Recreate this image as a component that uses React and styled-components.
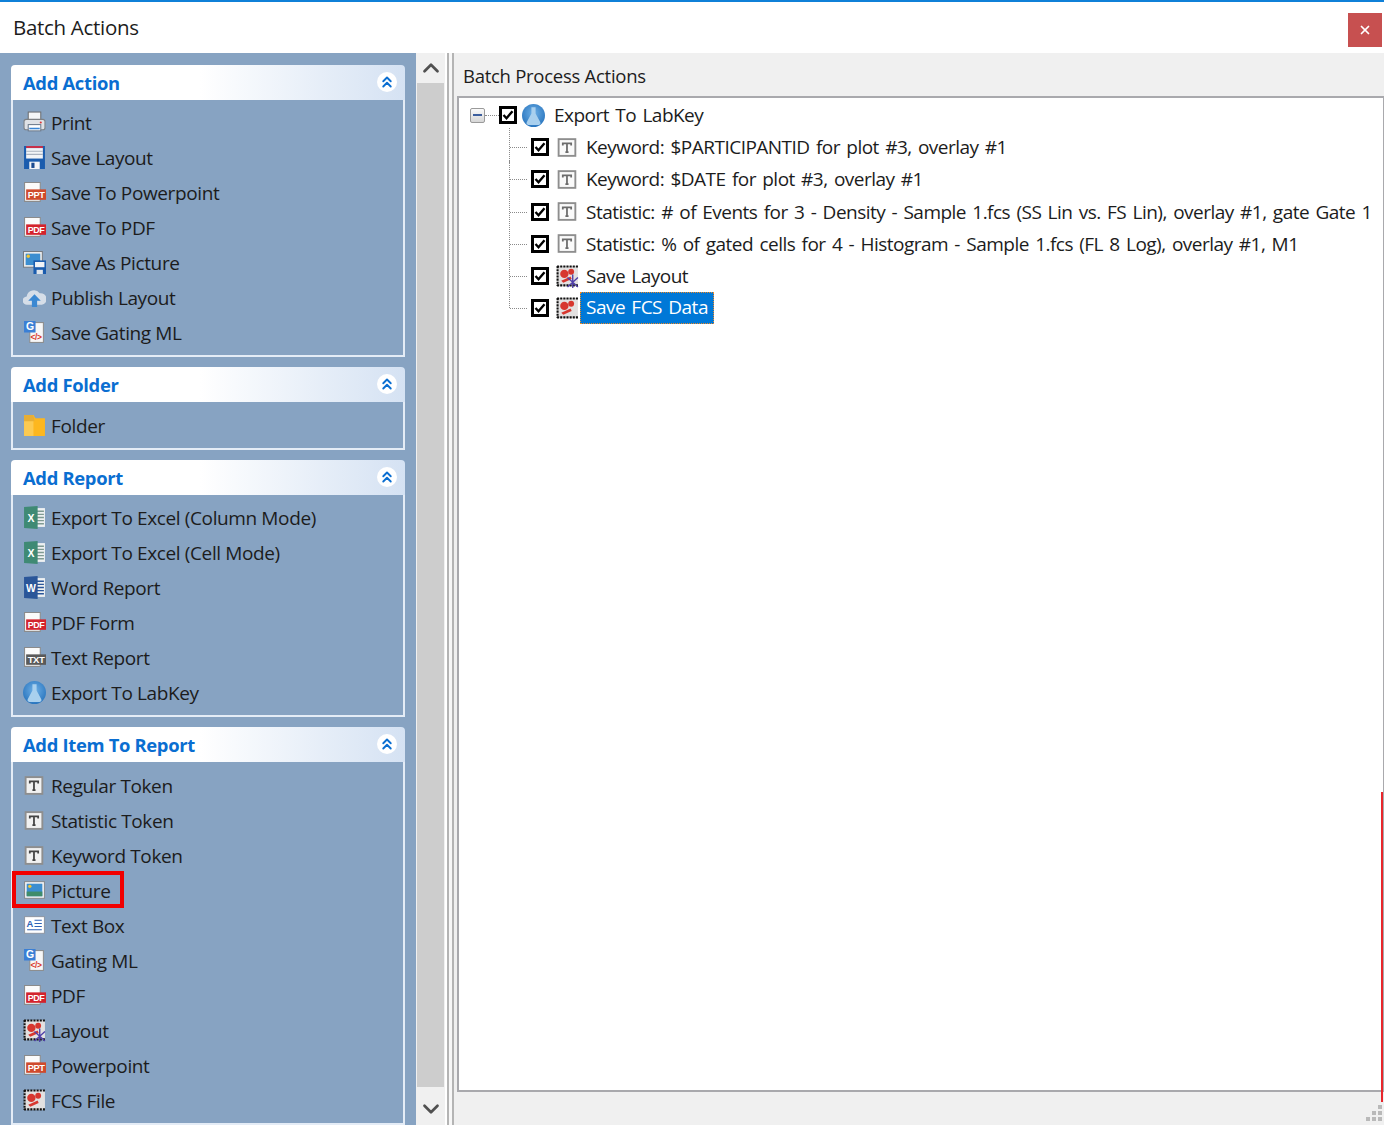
import styled, { createGlobalStyle } from 'styled-components'
import { ChevronDown, ChevronUp, ChevronsUp, X } from 'lucide-react'

const GlobalStyle = createGlobalStyle`
  html, body {
    margin: 0;
    background: #fff;
  }
  body {
    font-family: 'Open Sans', 'Noto Sans', 'Liberation Sans', sans-serif;
    color: #1c1c1c;
  }
  * {
    box-sizing: border-box;
  }
`

const Window = styled.div`
  border-top: 2px solid #0f80d8;
  display: flex;
  flex-direction: column;
  height: 1125px;
  overflow: hidden;
  position: relative;
  width: 1384px;
`

const TitleBar = styled.div`
  align-items: center;
  background: #fff;
  display: flex;
  flex: 0 0 51px;
  justify-content: space-between;
  padding: 0 2px 0 13px;
`

const Title = styled.div`
  font-size: 20.5px;
  letter-spacing: -0.3px;
  margin-bottom: 1px;
`

const CloseButton = styled.button`
  align-items: center;
  background: #c75050;
  border: 0;
  color: #fff;
  display: flex;
  height: 34px;
  justify-content: center;
  margin-top: 4px;
  padding: 0;
  width: 34px;
`

const Content = styled.div`
  display: flex;
  flex: 1;
  min-height: 0;
`

const SidePanel = styled.div`
  background: #87a3c2;
  display: flex;
  flex: 0 0 416px;
  flex-direction: column;
  padding: 12px 11px 0;
`

const Group = styled.section`
  flex: none;
  margin-bottom: 10px;
`

const GroupHeader = styled.div`
  align-items: center;
  background: linear-gradient(90deg, #fff 0%, #fff 48%, #d5e2f3 100%);
  border-radius: 4px 4px 0 0;
  display: flex;
  height: 35px;
  justify-content: space-between;
  padding: 0 8px 1px 12px;
`

const GroupTitle = styled.div`
  color: #0a6ed1;
  font-size: 18.4px;
  font-weight: 700;
  letter-spacing: -0.32px;
`

const CollapseButton = styled.span`
  align-items: center;
  background: #fff;
  border-radius: 50%;
  color: #0a6ed1;
  display: flex;
  height: 20px;
  justify-content: center;
  width: 20px;
`

const GroupBody = styled.div`
  border: solid #e4ecf6;
  border-width: 0 2px 2px;
  padding: ${({ $shift }) => `${5 + ($shift || 0)}px 0 5px`};
`

const Item = styled.div`
  align-items: center;
  display: flex;
  font-size: 19px;
  gap: 5px;
  height: 35px;
  letter-spacing: -0.38px;
  padding-left: 10px;
  position: relative;
  white-space: nowrap;

  ${({ $marked }) => $marked && `
    &::after {
      border: 4px solid #f00000;
      box-sizing: border-box;
      content: '';
      height: 37px;
      left: -1px;
      position: absolute;
      top: -2px;
      width: 112px;
    }
  `}
`

const ScrollBar = styled.div`
  background: #f0f0f0;
  display: flex;
  flex: 0 0 29px;
  flex-direction: column;
  padding-left: 1px;
`

const ScrollButton = styled.div`
  align-items: center;
  color: #505050;
  display: flex;
  flex: 0 0 ${({ $height }) => $height}px;
  justify-content: center;
  padding-top: ${({ $offset }) => $offset || 0}px;
  width: 27px;
`

const ScrollTrack = styled.div`
  background: #cdcdcd;
  flex: 1;
  width: 27px;
`

const Splitter = styled.div`
  background: #f7f7f7;
  border: solid #b4b4b4;
  border-width: 0 2px;
  flex: 0 0 7px;
  margin-left: 2px;
`

const ActionsPanel = styled.div`
  background: #f0f0f0;
  display: flex;
  flex: 1;
  flex-direction: column;
  min-width: 0;
  padding: 0 0 33px 3px;
  position: relative;
`

const ActionsTitle = styled.div`
  align-items: center;
  display: flex;
  flex: 0 0 43px;
  font-size: 18.5px;
  letter-spacing: -0.27px;
  padding: 1px 0 0 6px;
`

const TreeBox = styled.div`
  background: #fff;
  border: solid #a9a9ad;
  border-width: 2px 1px 2px 2px;
  flex: 1;
  overflow: hidden;
  padding-top: 1px;
`

const TreeRow = styled.div`
  align-items: center;
  display: flex;
  font-size: 19px;
  height: 32.2px;
  letter-spacing: -0.52px;
  padding-left: ${({ $root }) => ($root ? 11 : 50)}px;
  white-space: nowrap;
  word-spacing: 1.9px;
`

const Expander = styled.span`
  align-items: center;
  background: linear-gradient(180deg, #fafafa, #d6d6d6);
  border: 1px solid #9a9a9a;
  border-radius: 2px;
  display: flex;
  flex: 0 0 15px;
  height: 15px;
  justify-content: center;

  &::after {
    background: #3d5f9e;
    content: '';
    height: 2px;
    width: 9px;
  }
`

const RootDots = styled.span`
  border-top: 1px dotted #8a8a8a;
  flex: 0 0 14px;
`

const Connector = styled.span`
  align-self: stretch;
  flex: 0 0 22px;
  position: relative;

  &::before {
    border-left: 1px dotted #8a8a8a;
    bottom: ${({ $last }) => ($last ? '50%' : 0)};
    content: '';
    left: 0;
    position: absolute;
    top: -3px;
  }

  &::after {
    border-top: 1px dotted #8a8a8a;
    content: '';
    left: 1px;
    position: absolute;
    top: 50%;
    width: 17px;
  }
`

const CheckBox = styled.span`
  align-items: center;
  background: #fff;
  border: 3px solid #000;
  color: #000;
  display: flex;
  flex: 0 0 18px;
  height: 18px;
  justify-content: center;
`

const TreeIcon = styled.span`
  align-items: center;
  display: flex;
  flex: 0 0 23px;
  justify-content: center;
  margin: 0 ${({ $root }) => ($root ? 9 : 7)}px 0 ${({ $root }) => ($root ? 5 : 7)}px;
`

const TreeLabel = styled.span`
  ${({ $selected }) => $selected && `
    background: #0078d7;
    border: 1px dotted #f08a24;
    color: #fff;
    height: 32px;
    line-height: 29px;
    margin-left: -6px;
    padding: 0 5px;
  `}
`

const RedEdge = styled.div`
  background: #e8262c;
  height: 310px;
  position: absolute;
  right: 1px;
  top: 739px;
  width: 2px;
`

const Grip = styled.svg`
  bottom: 3px;
  position: absolute;
  right: 1px;
`

const Svg = ({ children }) => (
  <svg width={23} height={23} viewBox='0 0 22 22' style={{ flex: 'none' }}>
    {children}
  </svg>
)

const labelFont = 'Liberation Sans, sans-serif'

const PrintIcon = () => (
  <Svg>
    <rect x='5' y='1' width='12' height='8' fill='#f4f6f8' stroke='#6d6f72' />
    <rect x='1' y='8' width='20' height='10' rx='2' fill='#dfe2e6' stroke='#7d8084' />
    <circle cx='17' cy='11' r='1' fill='#d33' />
    <rect x='5' y='13' width='12' height='6' fill='#fff' stroke='#6d7b8c' />
    <rect x='6' y='16' width='10' height='1.5' fill='#3a86d4' />
  </Svg>
)

const SaveIcon = () => (
  <Svg>
    <rect x='1' y='0' width='20' height='22' fill='#1a5cae' />
    <rect x='3' y='0' width='16' height='2' fill='#c7304a' />
    <rect x='3' y='2' width='16' height='10' fill='#f2f4f7' />
    <path d='M3 5h16M3 8h16' stroke='#aab2bf' />
    <rect x='6' y='15' width='10' height='7' fill='#f2f4f7' />
    <rect x='8' y='16' width='3' height='5' fill='#1a4a90' />
  </Svg>
)

const BadgeDoc = ({ label, color }) => (
  <Svg>
    <path d='M1.5 1.5h15v18h-15z' fill='#fbfbfb' stroke='#8b8b8b' />
    <rect x='3' y='8' width='19' height='10' fill={color} />
    <text x='12.5' y='16.2' fontSize='8.5' fontWeight='700' textAnchor='middle' textLength='16' lengthAdjust='spacingAndGlyphs' fontFamily={labelFont} fill='#fff'>{label}</text>
  </Svg>
)

const PictureIcon = () => (
  <Svg>
    <rect x='1.5' y='2.5' width='19' height='16' fill='#f4f4f4' stroke='#858a90' />
    <rect x='3.5' y='4.5' width='15' height='12' fill='#3c8ed0' />
    <path d='M3.5 12h15v4.5h-15z' fill='#3f8c6a' />
    <circle cx='6.5' cy='7' r='1.6' fill='#f4c430' />
  </Svg>
)

const SavePictureIcon = () => (
  <Svg>
    <rect x='0.5' y='0.5' width='18' height='15' fill='#f1f1f1' stroke='#757b82' />
    <rect x='2.5' y='2.5' width='14' height='11' fill='#3c8ed0' />
    <circle cx='5' cy='5' r='1.6' fill='#f4c430' />
    <rect x='10' y='9' width='12' height='13' fill='#1a5cae' />
    <rect x='11.5' y='10.5' width='9' height='5' fill='#f2f4f7' />
    <rect x='13' y='18' width='6' height='4' fill='#dfe4ea' />
  </Svg>
)

const CloudIcon = () => (
  <Svg>
    <path d='M4 18a4 4 0 0 1-.5-8A7 7 0 0 1 16 7a5.5 5.5 0 0 1 2 11z' fill='#d6dee8' />
    <path d='M11 8l6 6h-3.5v6h-5v-6H5z' fill='#3b88d2' />
  </Svg>
)

const GatingIcon = () => (
  <Svg>
    <rect x='6.5' y='1.5' width='13' height='19' fill='#f7f7f7' stroke='#8c8c8c' />
    <rect x='1' y='0' width='11' height='11' fill='#3a7fd5' />
    <text x='6.5' y='9' fontSize='10' fontWeight='700' textAnchor='middle' fontFamily={labelFont} fill='#fff'>G</text>
    <text x='12.5' y='18.5' fontSize='8' fontWeight='700' textAnchor='middle' fontFamily={labelFont} fill='#d9362b'>&lt;/&gt;</text>
  </Svg>
)

const FolderIcon = () => (
  <Svg>
    <path d='M1 1h9l2 3h9v17H1z' fill='#fdb71f' />
    <path d='M1 1h9v20H1z' fill='#fcca52' />
    <path d='M1 1h9l1 6H1z' fill='#e8ae34' />
  </Svg>
)

const OfficeIcon = ({ letter, color, rule }) => (
  <Svg>
    <rect x='11' y='2' width='10' height='18' fill='#eef1f2' />
    <path d='M13 5h7M13 8h7M13 11h7M13 14h7M13 17h7' stroke={rule} strokeWidth='1.4' />
    <path d='M1 1l13-1v22L1 21z' fill={color} />
    <text x='7.5' y='15' fontSize='10' fontWeight='700' textAnchor='middle' fontFamily={labelFont} fill='#fff'>{letter}</text>
  </Svg>
)

const FlaskIcon = () => (
  <Svg>
    <defs>
      <radialGradient id='flaskDisc' cx='50%' cy='40%' r='60%'>
        <stop offset='0%' stopColor='#6fb0e6' />
        <stop offset='100%' stopColor='#2a76bf' />
      </radialGradient>
    </defs>
    <circle cx='11' cy='11' r='11' fill='url(#flaskDisc)' />
    <path d='M9 3h4v6l4.5 8.5q.7 2-1.5 2.5H6q-2.2-.5-1.5-2.5L9 9z' fill='#a9d0ee' />
  </Svg>
)

const TokenIcon = ({ pale }) => (
  <Svg>
    <rect x='2.5' y='3' width='16' height='16' fill={pale ? '#fafafa' : '#f1f1f1'} stroke='#8e8e8e' strokeWidth='1.8' />
    <path d='M6.5 9V7h8v2M10.5 7v8.5M9 15.5h3' fill='none' stroke={pale ? '#6c6c6c' : '#444'} strokeWidth='1.7' />
  </Svg>
)

const TextBoxIcon = () => (
  <Svg>
    <rect x='1.5' y='2.5' width='19' height='16' fill='#fff' stroke='#8f98a4' />
    <text x='6.5' y='12' fontSize='9' fontWeight='700' textAnchor='middle' fontFamily={labelFont} fill='#2d62b5'>A</text>
    <path d='M11 6h7M11 9h7M11 12h7M4 15h14' stroke='#2d62b5' />
  </Svg>
)

const FcsGlyph = () => (
  <>
    <rect x='1' y='1' width='20' height='19' fill='#e3e1e1' />
    <path d='M1 1.5h20M1.5 1v19M1 19.5h20' fill='none' stroke='#111' strokeWidth='2' strokeDasharray='2 1' />
    <circle cx='8' cy='8.5' r='4' fill='#d7372f' />
    <circle cx='14.5' cy='6.5' r='2.8' fill='#d7372f' />
    <path d='M5 15l9-4 1 2.5-8 3.5z' fill='#d7372f' />
  </>
)

const FcsIcon = () => (
  <Svg>
    <FcsGlyph />
  </Svg>
)

const LayoutIcon = () => (
  <Svg>
    <FcsGlyph />
    <path d='M11 12l10 9M21 12l-10 9M16 9v13' stroke='#4f3fa8' strokeWidth='1.3' />
  </Svg>
)

const groups = [
  {
    title: 'Add Action',
    items: [
      ['Print', <PrintIcon />],
      ['Save Layout', <SaveIcon />],
      ['Save To Powerpoint', <BadgeDoc label='PPT' color='#cf4a2c' />],
      ['Save To PDF', <BadgeDoc label='PDF' color='#d3232c' />],
      ['Save As Picture', <SavePictureIcon />],
      ['Publish Layout', <CloudIcon />],
      ['Save Gating ML', <GatingIcon />],
    ],
  },
  {
    title: 'Add Folder',
    shift: 1,
    items: [['Folder', <FolderIcon />]],
  },
  {
    title: 'Add Report',
    items: [
      ['Export To Excel (Column Mode)', <OfficeIcon letter='X' color='#3f8a74' rule='#7f9a92' />],
      ['Export To Excel (Cell Mode)', <OfficeIcon letter='X' color='#3f8a74' rule='#7f9a92' />],
      ['Word Report', <OfficeIcon letter='W' color='#2a5699' rule='#2a5699' />],
      ['PDF Form', <BadgeDoc label='PDF' color='#d3232c' />],
      ['Text Report', <BadgeDoc label='TXT' color='#5a5a5a' />],
      ['Export To LabKey', <FlaskIcon />],
    ],
  },
  {
    title: 'Add Item To Report',
    shift: 1,
    items: [
      ['Regular Token', <TokenIcon />],
      ['Statistic Token', <TokenIcon />],
      ['Keyword Token', <TokenIcon />],
      ['Picture', <PictureIcon />, true],
      ['Text Box', <TextBoxIcon />],
      ['Gating ML', <GatingIcon />],
      ['PDF', <BadgeDoc label='PDF' color='#d3232c' />],
      ['Layout', <LayoutIcon />],
      ['Powerpoint', <BadgeDoc label='PPT' color='#cf4a2c' />],
      ['FCS File', <FcsIcon />],
    ],
  },
]

const treeItems = [
  ['Keyword: $PARTICIPANTID for plot #3, overlay #1', <TokenIcon pale />],
  ['Keyword: $DATE for plot #3, overlay #1', <TokenIcon pale />],
  ['Statistic: # of Events for 3 - Density - Sample 1.fcs (SS Lin vs. FS Lin), overlay #1, gate Gate 1', <TokenIcon pale />],
  ['Statistic: % of gated cells for 4 - Histogram - Sample 1.fcs (FL 8 Log), overlay #1, M1', <TokenIcon pale />],
  ['Save Layout', <LayoutIcon />],
  ['Save FCS Data', <FcsIcon />],
]

const Check = () => (
  <svg width='12' height='12' viewBox='0 0 12 12'>
    <path d='M1.5 6l3 3.2 6-7' fill='none' stroke='#000' strokeWidth='2.4' />
  </svg>
)

const App = () => (
  <Window>
    <GlobalStyle />
    <TitleBar>
      <Title>Batch Actions</Title>
      <CloseButton aria-label='Close'>
        <X size={14} strokeWidth={3} />
      </CloseButton>
    </TitleBar>
    <Content>
      <SidePanel>
        {groups.map(({ items, shift, title }) => (
          <Group key={title}>
            <GroupHeader>
              <GroupTitle>{title}</GroupTitle>
              <CollapseButton>
                <ChevronsUp size={18} strokeWidth={2.5} />
              </CollapseButton>
            </GroupHeader>
            <GroupBody $shift={shift}>
              {items.map(([label, icon, marked]) => (
                <Item key={label} $marked={marked}>
                  {icon}
                  <span>{label}</span>
                </Item>
              ))}
            </GroupBody>
          </Group>
        ))}
      </SidePanel>
      <ScrollBar>
        <ScrollButton $height={30}>
          <ChevronUp size={26} strokeWidth={2.5} />
        </ScrollButton>
        <ScrollTrack />
        <ScrollButton $height={38} $offset={6}>
          <ChevronDown size={26} strokeWidth={2.5} />
        </ScrollButton>
      </ScrollBar>
      <Splitter />
      <ActionsPanel>
        <ActionsTitle>Batch Process Actions</ActionsTitle>
        <TreeBox>
          <TreeRow $root>
            <Expander />
            <RootDots />
            <CheckBox>
              <Check />
            </CheckBox>
            <TreeIcon $root>
              <FlaskIcon />
            </TreeIcon>
            <TreeLabel>Export To LabKey</TreeLabel>
          </TreeRow>
          {treeItems.map(([label, icon], index) => {
            const last = index === treeItems.length - 1
            return (
              <TreeRow key={label}>
                <Connector $last={last} />
                <CheckBox>
                  <Check />
                </CheckBox>
                <TreeIcon>{icon}</TreeIcon>
                <TreeLabel $selected={last}>{label}</TreeLabel>
              </TreeRow>
            )
          })}
        </TreeBox>
        <RedEdge />
        <Grip width='18' height='18' viewBox='0 0 18 18' fill='#b9b9b9'>
          <rect x='13' y='1' width='4' height='4' />
          <rect x='7' y='7' width='4' height='4' />
          <rect x='13' y='7' width='4' height='4' />
          <rect x='1' y='13' width='4' height='4' />
          <rect x='7' y='13' width='4' height='4' />
          <rect x='13' y='13' width='4' height='4' />
        </Grip>
      </ActionsPanel>
    </Content>
  </Window>
)

export default App
